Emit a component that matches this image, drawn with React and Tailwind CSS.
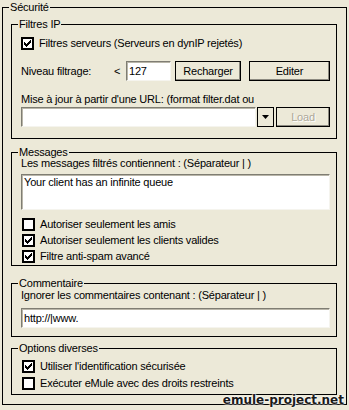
import React from "react";

const CHECK_PIXELS = [
  [6, 0], [5, 1], [6, 1], [0, 2], [4, 2], [5, 2], [6, 2],
  [0, 3], [1, 3], [3, 3], [4, 3], [5, 3],
  [0, 4], [1, 4], [2, 4], [3, 4], [4, 4],
  [1, 5], [2, 5], [3, 5], [2, 6],
];

function CheckBox({ checked, label }) {
  return (
    <div className="flex items-center h-[13px]">
      <div className="w-[13px] h-[13px] border-2 border-black bg-white shrink-0 flex items-center justify-center">
        {checked && (
          <svg width="7" height="7" viewBox="0 0 7 7" shapeRendering="crispEdges">
            {CHECK_PIXELS.map(([x, y]) => (
              <rect key={`${x}-${y}`} x={x} y={y} width="1" height="1" fill="#000" />
            ))}
          </svg>
        )}
      </div>
      <span className="ml-[5px] whitespace-nowrap">{label}</span>
    </div>
  );
}

const sunken =
  "bg-white border border-t-[#7f7d73] border-l-[#7f7d73] border-r-[#f5f4ee] border-b-[#f5f4ee] shadow-[inset_1px_1px_0_#b9b6a9]";

function Button({ children, disabled, className = "" }) {
  return (
    <div
      className={`h-[20px] border border-black flex items-center justify-center shadow-[inset_-1px_-1px_0_#8c8a80] ${
        disabled ? "text-[#aca899] [text-shadow:1px_1px_0_#fff]" : ""
      } ${className}`}
    >
      {children}
    </div>
  );
}

// group box: the title sits over the top border line
function Group({ title, className = "", children }) {
  return (
    <div className={`relative border border-black ${className}`}>
      <span className="absolute -top-[7px] left-[6px] px-[1px] leading-[13px] bg-[#ece9d8] whitespace-nowrap">
        {title}
      </span>
      {children}
    </div>
  );
}

export default function App() {
  return (
    <div className="relative w-[349px] h-[410px] bg-[#ece9d8] overflow-hidden pt-[7px] pl-[2px] font-['Liberation_Sans',Arial,sans-serif] text-[11px] leading-[13px] tracking-[-0.2px] text-black">
      <Group title="Sécurité" className="w-[345px]">
        <div className="pt-[16px] pl-[8px] pr-[9px] pb-[9px]">
          {/* Filtres IP */}
          <Group title="Filtres IP">
            <div className="pt-[12px] pl-[9px] pr-[6px] pb-[11px]">
              <CheckBox checked label="Filtres serveurs (Serveurs en dynIP rejetés)" />
              <div className="mt-[11px] flex items-center h-[20px]">
                <span className="w-[93px]">Niveau filtrage:</span>
                <span className="w-[12px]">&lt;</span>
                <div className={`${sunken} w-[45px] h-[20px] pl-[2px] flex items-center`}>127</div>
                <Button className="ml-[4px] w-[66px]">Recharger</Button>
                <Button className="ml-[8px] flex-1">Editer</Button>
              </div>
              <div className="mt-[12px] whitespace-nowrap">
                Mise à jour à partir d'une URL: (format filter.dat ou
              </div>
              <div className="mt-[1px] flex h-[20px]">
                <div className={`${sunken} flex-1`} />
                <div className="w-[17px] border border-black flex items-center justify-center ml-[1px]">
                  <svg width="7" height="4" viewBox="0 0 7 4">
                    <path d="M0 0h7L3.5 4z" fill="#000" />
                  </svg>
                </div>
                <Button disabled className="ml-[2px] w-[54px]">Load</Button>
              </div>
            </div>
          </Group>

          {/* Messages */}
          <Group title="Messages" className="mt-[13px]">
            <div className="pt-[4px] pl-[9px] pr-[6px] pb-[2px]">
              <div className="whitespace-nowrap">Les messages filtrés contiennent : (Séparateur | )</div>
              <div className={`${sunken} mt-[4px] h-[36px] pl-[2px] pt-[1px]`}>Your client has an infinite queue</div>
              <div className="mt-[8px] flex flex-col gap-[3px] pl-[1px]">
                <CheckBox label="Autoriser seulement les amis" />
                <CheckBox checked label="Autoriser seulement les clients valides" />
                <CheckBox checked label="Filtre anti-spam avancé" />
              </div>
            </div>
          </Group>

          {/* Commentaire */}
          <Group title="Commentaire" className="mt-[17px]">
            <div className="pt-[5px] pl-[9px] pr-[6px] pb-[8px]">
              <div className="whitespace-nowrap">Ignorer les commentaires contenant : (Séparateur | )</div>
              <div className={`${sunken} mt-[6px] h-[20px] pl-[2px] flex items-center`}>http://|www.</div>
            </div>
          </Group>

          {/* Options diverses */}
          <Group title="Options diverses" className="mt-[11px]">
            <div className="pt-[11px] pl-[10px] pr-[6px] pb-[4px] flex flex-col gap-[4px]">
              <CheckBox checked label="Utiliser l'identification sécurisée" />
              <CheckBox label="Exécuter eMule avec des droits restreints" />
            </div>
          </Group>
        </div>
      </Group>

      <div className="absolute right-[5px] bottom-[3px] font-['DejaVu_Sans',Verdana,sans-serif] font-bold text-[12px] leading-[14px] tracking-normal text-[#1a1a1a] [text-shadow:0_0_2px_#fff,0_0_2px_#fff,0_0_1px_#fff]">
        emule-project.net
      </div>
    </div>
  );
}
